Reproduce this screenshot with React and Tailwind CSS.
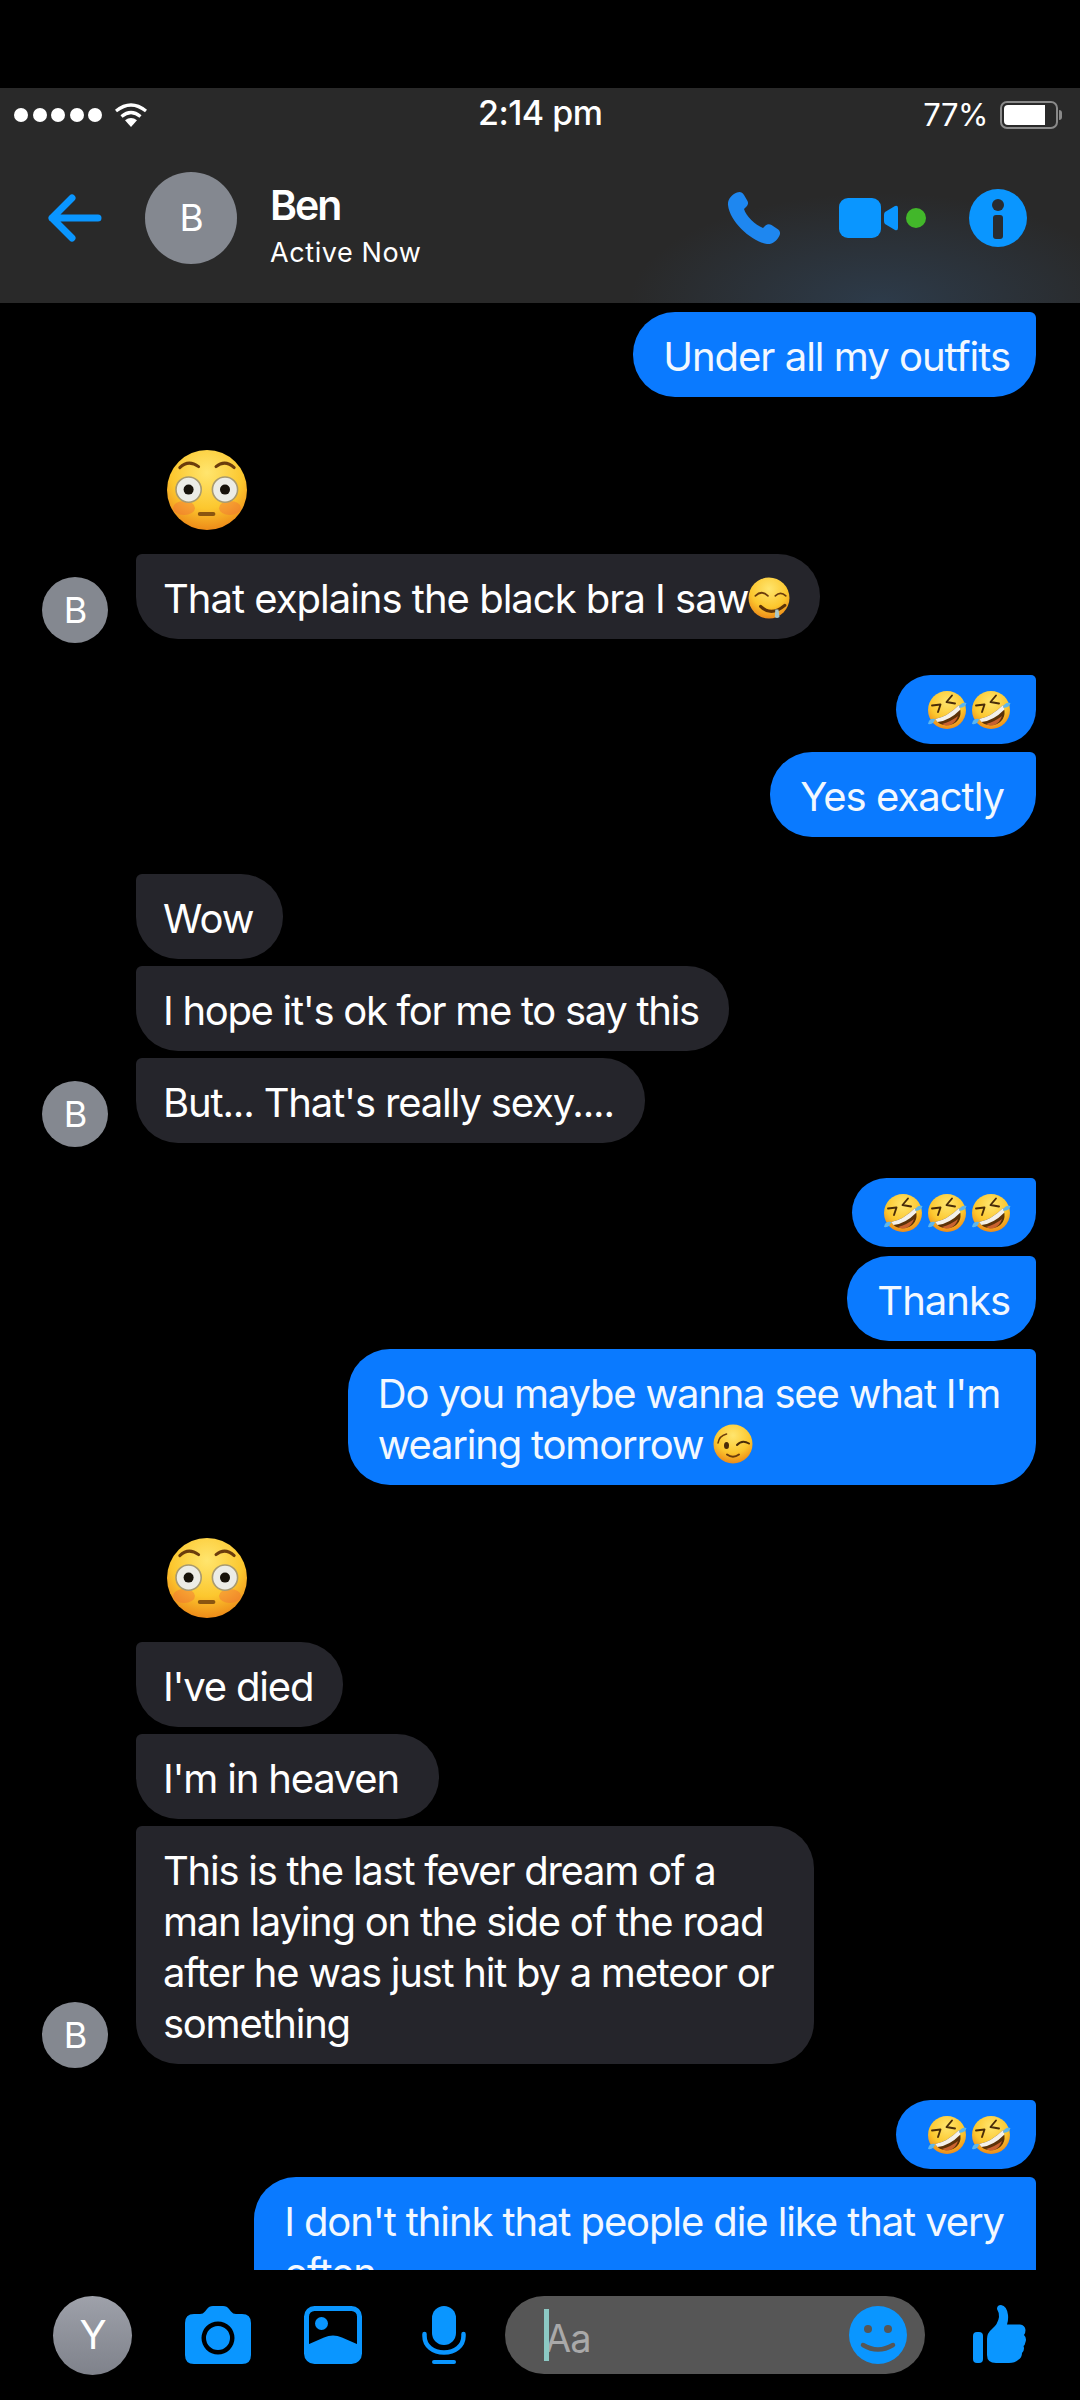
import React from 'react';

const FONT = "font-['Inter','Noto_Sans',sans-serif]";

const Face = ({ children, size = 40, className = '', id }) => (
  <svg viewBox="0 0 40 40" width={size} height={size} className={`inline-block shrink-0 ${className}`}>
    <defs>
      <radialGradient id={id} cx="50%" cy="28%" r="75%">
        <stop offset="0%" stopColor="#ffe56e" />
        <stop offset="60%" stopColor="#fcc72e" />
        <stop offset="100%" stopColor="#ec8416" />
      </radialGradient>
    </defs>
    {children(id)}
  </svg>
);

const Flushed = ({ id }) => (
  <Face size={80} id={id} className="block">
    {(g) => (
      <>
        <circle cx="20" cy="20" r="20" fill={`url(#${g})`} />
        <ellipse cx="8.5" cy="29" rx="5.5" ry="3.5" fill="#f0683a" opacity="0.4" />
        <ellipse cx="31.5" cy="29" rx="5.5" ry="3.5" fill="#f0683a" opacity="0.4" />
        <path d="M6.4 8.8Q10.7 4.6 15.8 8.3" stroke="#6b3c0c" strokeWidth="1.5" fill="none" strokeLinecap="round" />
        <path d="M24.5 8.3Q29 4.6 33.6 8.8" stroke="#6b3c0c" strokeWidth="1.5" fill="none" strokeLinecap="round" />
        <circle cx="10.8" cy="19.8" r="6.3" fill="#ecece6" stroke="#a89a70" strokeWidth="0.8" />
        <circle cx="29" cy="19.8" r="6.3" fill="#ecece6" stroke="#a89a70" strokeWidth="0.8" />
        <circle cx="10.8" cy="19.8" r="2.5" fill="#17120a" />
        <circle cx="29" cy="19.8" r="2.5" fill="#17120a" />
        <rect x="15.4" y="31" width="8.8" height="2" rx="1" fill="#8a5510" />
      </>
    )}
  </Face>
);

const Rofl = ({ id }) => (
  <Face size={40} id={id}>
    {(g) => (
      <>
        <circle cx="20" cy="20" r="19" fill={`url(#${g})`} />
        <path d="M5 15.5L13.5 14.5L11 22" stroke="#4a2c08" strokeWidth="1.9" fill="none" strokeLinecap="round" strokeLinejoin="round" />
        <path d="M25 5.5L19.5 12L28 13.5" stroke="#4a2c08" strokeWidth="1.9" fill="none" strokeLinecap="round" strokeLinejoin="round" />
        <path d="M8 29Q20 27 32 15Q37 28 26 34Q14 38 8 29Z" fill="#5c3208" />
        <path d="M8 29Q20 27 32 15L33.5 19.5Q22 31 10.5 32Z" fill="#f4f1ea" />
        <path d="M15 34Q25 31 31 26Q29 33 22 35.5Q18 36 15 34Z" fill="#c9622f" />
        <path d="M39.5 13Q33.5 12 32 17.5Q38 18.5 39.5 13Z" fill="#5cb6ee" />
        <path d="M1 34Q7 35 8 29Q2 28 1 34Z" fill="#5cb6ee" />
      </>
    )}
  </Face>
);

// the smiling face with a drop at the corner of the mouth, after "saw"
const Drool = ({ id }) => (
  <Face size={42} id={id} className="align-[-6px]">
    {(g) => (
      <>
        <circle cx="20" cy="20" r="19.5" fill={`url(#${g})`} />
        <path d="M7 18Q13 12 19 18" stroke="#6b3c0c" strokeWidth="1.6" fill="none" strokeLinecap="round" />
        <path d="M26 18Q31 13 36 18" stroke="#6b3c0c" strokeWidth="1.6" fill="none" strokeLinecap="round" />
        <path d="M12 28Q22 38 35 27" stroke="#5c3208" strokeWidth="3" fill="none" strokeLinecap="round" />
        <path d="M26 31L29 31L30 38Q27.5 40 25.5 38Z" fill="#a9c8c9" />
      </>
    )}
  </Face>
);

const Wink = ({ id }) => (
  <Face size={40} id={id} className="align-[-5px]">
    {(g) => (
      <>
        <circle cx="20" cy="20" r="19.5" fill={`url(#${g})`} />
        <path d="M5 19Q6 12 13.5 10" stroke="#6b3c0c" strokeWidth="1.6" fill="none" strokeLinecap="round" />
        <ellipse cx="13.5" cy="21.5" rx="2.5" ry="3.6" fill="#4a2c08" />
        <path d="M24 21Q29 15.5 36 19.5" stroke="#4a2c08" strokeWidth="2" fill="none" strokeLinecap="round" />
        <path d="M14 30.5Q20 35 26 30.5" stroke="#6b3c0c" strokeWidth="2" fill="none" strokeLinecap="round" />
      </>
    )}
  </Face>
);

const Avatar = ({ letter = 'B' }) => (
  <div className="w-[66px] h-[66px] rounded-full bg-[#848890] text-white text-[36px] flex items-center justify-center shrink-0 -mb-1">
    {letter}
  </div>
);

const Mine = ({ children, mt = 'mt-[7px]', className = '' }) => (
  <div className={`flex justify-end pr-[44px] ${mt}`}>
    <div className={`bg-[#0a7aff] text-[#f2f8ff] rounded-l-[42px] rounded-tr-[6px] rounded-br-[42px] ${className}`}>
      {children}
    </div>
  </div>
);

const Theirs = ({ children, mt = 'mt-[7px]', avatar = false, className = '' }) => (
  <div className={`flex items-end pl-[42px] gap-[28px] ${mt}`}>
    {avatar ? <Avatar /> : <div className="w-[66px] shrink-0" />}
    <div className={`bg-[#25252b] text-white rounded-r-[42px] rounded-tl-[6px] rounded-bl-[42px] ${className}`}>
      {children}
    </div>
  </div>
);

const TextLine = ({ children }) => <p className="whitespace-nowrap">{children}</p>;

const padMine = 'pl-[30px] pt-[19px] pb-[15px] leading-[51px]';
const padTheirs = 'pl-[27px] pt-[19px] pb-[15px] leading-[51px]';
const padRofl = 'pl-[31px] pr-[25px] h-[69px] flex items-center gap-[4px]';

const StatusBar = () => (
  <div className="h-[50px] pt-[4px] flex items-center text-white relative">
    <div className="flex items-center gap-[4.5px] pl-[14px]">
      {[0, 1, 2, 3, 4].map((i) => (
        <span key={i} className="w-[14px] h-[14px] rounded-full bg-white" />
      ))}
    </div>
    <svg viewBox="0 0 32 24" width="32" height="24" className="ml-[13px]">
      <path d="M1 8Q16 -4 31 8" stroke="#fff" strokeWidth="3.2" fill="none" />
      <path d="M6.5 13.5Q16 5.5 25.5 13.5" stroke="#fff" strokeWidth="3.2" fill="none" />
      <path d="M16 24L10 17.2Q16 12.8 22 17.2Z" fill="#fff" />
    </svg>
    <span className="absolute left-[478px] top-[5px] text-[34px] font-medium tracking-[-0.5px] leading-[40px]">2:14 pm</span>
    <div className="ml-auto flex items-center pr-[18px]">
      <span className="text-[31px] leading-[40px] tracking-[-0.5px] mr-[12px]">77%</span>
      <div className="w-[58px] h-[28px] rounded-[7px] border-2 border-[#8a8a8a] p-[2px]">
        <div className="w-[41px] h-full bg-white rounded-l-[4px]" />
      </div>
      <div className="w-[3px] h-[10px] bg-[#8a8a8a] rounded-r-sm ml-[1px]" />
    </div>
  </div>
);

const Header = () => (
  <div className="h-[215px] shrink-0 bg-[#292929] relative overflow-hidden">
    <div className="absolute left-[630px] top-[105px] w-[500px] h-[220px] bg-[radial-gradient(closest-side,#2d3b4a,#2d3b4a00)]" />
    <div className="relative">
      <StatusBar />
      <div className="flex items-center h-[165px] pb-[6px]">
        <svg viewBox="0 0 54 48" width="54" height="48" className="ml-[48px]">
          <path d="M4 24H50M24 4L4 24L24 44" stroke="#0a96ff" strokeWidth="7" fill="none" strokeLinecap="round" strokeLinejoin="round" />
        </svg>
        <div className="ml-[43px] w-[92px] h-[92px] rounded-full bg-[#848890] text-white text-[37px] flex items-center justify-center">
          B
        </div>
        <div className="ml-[33px] pt-[16px] text-white">
          <div className="text-[41px] leading-[48px] font-semibold tracking-[-2px]">Ben</div>
          <div className="text-[27px] leading-[36px] mt-[6px] tracking-[0.6px]">Active Now</div>
        </div>
        <div className="ml-auto flex items-center">
          <svg viewBox="0 0 54 54" width="54" height="54">
            <path d="M10 1.5C13 0 15.5 1.5 17 4L20.5 10C21.5 12 21 14 19.5 15.5L17 18C19 25 28 34 36 37L38.5 34.5C40.5 33 42.5 33 44.5 34L50.5 38C53 39.5 54 42.5 52 45.5C49.5 50 45.5 53.5 40 53C26 51 3 32 1 14C0.5 8 5 3.5 10 1.5Z" fill="#1e87f0" />
          </svg>
          <svg viewBox="0 0 60 42" width="60" height="42" className="ml-[58px]">
            <rect x="0" y="1" width="42" height="40" rx="9" fill="#0a96ff" />
            <path d="M46 15L56 9Q59 8 59 11V31Q59 34 56 33L46 27Q45 26 45 24V18Q45 16 46 15Z" fill="#0a96ff" />
          </svg>
          <span className="w-[20px] h-[20px] rounded-full bg-[#42b72a] ml-[7px]" />
          <svg viewBox="0 0 58 58" width="58" height="58" className="ml-[43px] mr-[53px]">
            <circle cx="29" cy="29" r="29" fill="#0a96ff" />
            <circle cx="29" cy="16" r="6" fill="#292c30" />
            <rect x="24" y="26" width="10" height="24" rx="3" fill="#292c30" />
          </svg>
        </div>
      </div>
    </div>
  </div>
);

const Composer = () => (
  <div className="h-[130px] shrink-0 bg-black flex items-center">
    <div className="ml-[53px] w-[79px] h-[79px] rounded-full bg-gradient-to-b from-[#9ea1aa] to-[#7f828b] text-white text-[40px] flex items-center justify-center">
      Y
    </div>
    <svg viewBox="0 0 66 58" width="66" height="58" className="ml-[53px]">
      <path fillRule="evenodd" d="M9 8H15Q18 8 20 5.5L22 3Q24 0 28 0H38Q42 0 44 3L46 5.5Q48 8 51 8H57Q66 8 66 17V49Q66 58 57 58H9Q0 58 0 49V17Q0 8 9 8ZM33 15.5A16.5 16.5 0 1 0 33 48.5A16.5 16.5 0 1 0 33 15.5ZM33 20A12 12 0 1 1 33 44A12 12 0 1 1 33 20Z" fill="#0a96ff" />
    </svg>
    <svg viewBox="0 0 58 58" width="58" height="58" className="ml-[53px]">
      <rect x="2.5" y="2.5" width="53" height="53" rx="8" fill="none" stroke="#0a96ff" strokeWidth="5" />
      <circle cx="17.5" cy="17.5" r="6.5" fill="#0a96ff" />
      <path d="M4 38.5L20 31.5Q29 27.5 38 31.5L54 38.5V49Q54 56 47 56H11Q4 56 4 49Z" fill="#0a96ff" />
    </svg>
    <svg viewBox="0 0 44 58" width="44" height="58" className="ml-[60px]">
      <rect x="10" y="0" width="24" height="39" rx="12" fill="#0a96ff" />
      <path d="M2.5 28V30C2.5 40 11 46.5 22 46.5C33 46.5 41.5 40 41.5 30V28" stroke="#0a96ff" strokeWidth="4.5" fill="none" strokeLinecap="round" />
      <rect x="10" y="54" width="24" height="4" rx="2" fill="#0a96ff" />
    </svg>
    <div className="ml-[39px] w-[420px] h-[78px] rounded-full bg-[#565656] flex items-center pl-[39px] pr-[18px]">
      <div className="flex items-center flex-1 relative">
        <span className="w-[5px] h-[52px] bg-[#8cc9c4] absolute left-0" />
        <span className="text-[#a9a9a9] text-[38px] leading-[52px] pl-[1px] pt-[5px]">Aa</span>
      </div>
      <svg viewBox="0 0 58 58" width="58" height="58">
        <circle cx="29" cy="29" r="29" fill="#0a96ff" />
        <circle cx="19" cy="23" r="4" fill="#565656" />
        <circle cx="39" cy="23" r="4" fill="#565656" />
        <path d="M14 39Q29 48 44 39" stroke="#565656" strokeWidth="4.5" fill="none" strokeLinecap="round" />
      </svg>
    </div>
    <svg viewBox="0 0 56 60" width="56" height="60" className="ml-[46px]">
      <rect x="2" y="27" width="10" height="31" rx="4" fill="#0a96ff" />
      <path d="M16 34Q16 28 21 24Q27 19 28 12Q28 7 26 4Q26 0 30 0Q36 1 37 10Q37.5 15 36 19.5H49Q54 20 54.5 25Q54.5 28 53 30Q56 33 54.5 37Q54 40 52.5 41Q54 45 51 48Q51 53 47 55Q44 58 38 58H25Q16 58 16 50Z" fill="#0a96ff" />
    </svg>
  </div>
);

export default function App() {
  return (
    <div className={`w-[1080px] h-[2400px] bg-black flex flex-col overflow-hidden text-[40px] tracking-[-1px] ${FONT}`}>
      <div className="h-[88px] shrink-0" />
      <Header />
      <div className="h-[1967px] shrink-0 overflow-hidden pt-[9px]">
        <Mine mt="mt-0" className={`${padMine} pr-[26px]`}><TextLine>Under all my outfits</TextLine></Mine>

        <div className="mt-[53px] ml-[167px]"><Flushed id="fl1" /></div>
        <Theirs mt="mt-[24px]" avatar className={`${padTheirs} pr-[30px]`}>
          <TextLine>That explains the black bra I saw<Drool id="dr1" /></TextLine>
        </Theirs>

        <Mine mt="mt-[36px]" className={padRofl}>
          <Rofl id="r1" /><Rofl id="r2" />
        </Mine>
        <Mine mt="mt-2" className={`${padMine} pr-[32px]`}><TextLine>Yes exactly</TextLine></Mine>

        <Theirs mt="mt-[37px]" className={`${padTheirs} pr-[30px]`}><TextLine>Wow</TextLine></Theirs>
        <Theirs className={`${padTheirs} pr-[30px] tracking-[-1.3px]`}><TextLine>I hope it's ok for me to say this</TextLine></Theirs>
        <Theirs avatar className={`${padTheirs} pr-[31px] tracking-[-1.15px]`}><TextLine>But... That's really sexy....</TextLine></Theirs>

        <Mine mt="mt-[35px]" className={padRofl}>
          <Rofl id="r3" /><Rofl id="r4" /><Rofl id="r5" />
        </Mine>
        <Mine mt="mt-[9px]" className={`${padMine} pr-[26px]`}><TextLine>Thanks</TextLine></Mine>
        <Mine mt="mt-2" className={`${padMine} pr-[36px] tracking-[-1.2px]`}>
          <TextLine>Do you maybe wanna see what I'm</TextLine>
          <TextLine>wearing tomorrow <Wink id="w1" /></TextLine>
        </Mine>

        <div className="mt-[53px] ml-[167px]"><Flushed id="fl2" /></div>
        <Theirs mt="mt-[24px]" className={`${padTheirs} pr-[30px] tracking-[-1.2px]`}><TextLine>I've died</TextLine></Theirs>
        <Theirs className={`${padTheirs} pr-[40px] tracking-[-1.2px]`}><TextLine>I'm in heaven</TextLine></Theirs>
        <Theirs avatar className={`${padTheirs} w-[678px] tracking-[-1.25px]`}>
          <TextLine>This is the last fever dream of a</TextLine>
          <TextLine>man laying on the side of the road</TextLine>
          <TextLine>after he was just hit by a meteor or</TextLine>
          <TextLine>something</TextLine>
        </Theirs>

        <Mine mt="mt-[36px]" className={padRofl}>
          <Rofl id="r6" /><Rofl id="r7" />
        </Mine>
        <Mine mt="mt-2" className={`${padMine} pr-[32px] tracking-[-1.1px]`}>
          <TextLine>I don't think that people die like that very</TextLine>
          <TextLine>often</TextLine>
        </Mine>
      </div>
      <Composer />
    </div>
  );
}
